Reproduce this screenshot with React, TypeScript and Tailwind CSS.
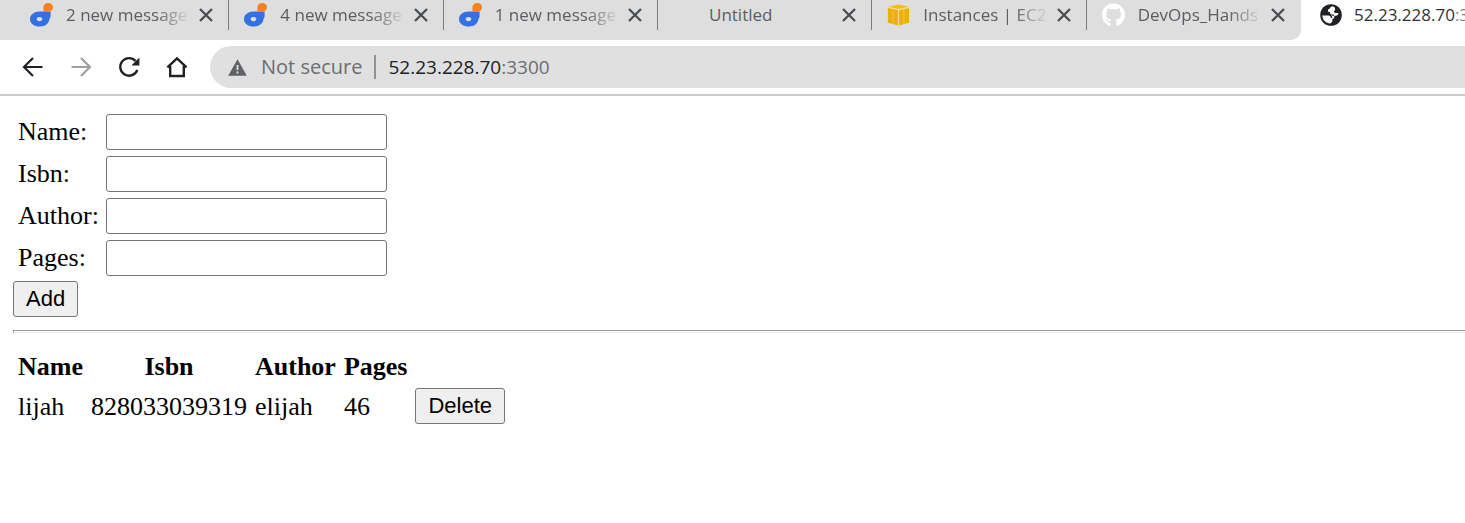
import React from "react";
import { FaGithub } from "react-icons/fa";

function MessengerIcon() {
  return (
    <svg viewBox="0 0 23 24" className="h-6 w-[23px]" aria-hidden="true">
      <path
        fill="#3470e0"
        fillRule="evenodd"
        d="M9.5 8.6H20.6V13C20.6 14.6 19.6 15 19.4 16.6C18.8 20.8 15.2 23.6 9.8 23.6C4.4 23.6 0 20.6 0 16.2C0 11.8 4.2 8.6 9.5 8.6ZM9.5 14C7.8 14 6.7 14.8 6.7 16.1C6.7 17.4 7.8 18.2 9.5 18.2C11.2 18.2 12.3 17.4 12.3 16.1C12.3 14.8 11.2 14 9.5 14Z"
      />
      <path
        fill="#f5821c"
        d="M13.4 8.8V4.6C13.4 1.9 15.4 0.1 18.4 0.1C21.2 0.1 23 1.7 23 4.3C23 7 21 8.8 18 8.8Z"
      />
    </svg>
  );
}

function CubeIcon() {
  return (
    <svg viewBox="0 0 22 22" className="h-[22px] w-[23px]" aria-hidden="true">
      <path fill="#f5bb16" d="M0.6 2.8L11 0.4L21.4 2.8L11 6Z" />
      <path fill="#ebb010" d="M0.4 3.8L10.6 6V21.6L0.4 18.8ZM21.6 3.8L11.4 6V21.6L21.6 18.8Z" />
      <path stroke="#f6dc8c" strokeWidth="1.2" d="M0.6 3.3L11 5.6L21.4 3.3M11 6V21.6" fill="none" />
      <path stroke="#f4c544" d="M5.6 5V20M16.4 5V20" fill="none" />
    </svg>
  );
}

function GlobeIcon() {
  return (
    <svg viewBox="0 0 22 22" className="size-[22px]" aria-hidden="true">
      <circle cx="11" cy="11" r="10.8" fill="#202124" />
      <path
        fill="#fff"
        d="M12.2 2.3C10.8 3 10 3.6 10 4.6C9.2 5 8 5.2 8 6.4C8 7.6 8.6 8 9.8 8C10 9.8 10.8 10.6 12.6 10.6C14 10.6 14.4 11.2 14.4 12.4C14.4 14 13.6 14.6 12.4 14.8V17C12.2 18 11.2 18.6 10.4 19.6C5.6 19.4 2.6 16 2.3 11.6H7.4C9.6 11.6 10.8 12.2 10.8 14H12.2C12.2 12.8 11.6 11.6 10.8 11C12.6 12 16 12.4 17.6 11C19 9.8 18.6 8.8 16.8 9C15 9.2 13.8 8.4 13.8 7.2C15.4 6.6 15.6 4.6 14.4 3Z"
      />
    </svg>
  );
}

function CloseIcon() {
  return (
    <svg viewBox="0 0 22 22" className="size-[22px]" fill="none" stroke="#4a4d51" strokeWidth="2.3" aria-hidden="true">
      <path d="M5 5L17 17M17 5L5 17" />
    </svg>
  );
}

type TabData = { title: string; icon: React.ReactNode };

const tabs: TabData[] = [
  { title: "2 new message", icon: <MessengerIcon /> },
  { title: "4 new message", icon: <MessengerIcon /> },
  { title: "1 new message", icon: <MessengerIcon /> },
  { title: "Untitled", icon: null },
  { title: "Instances | EC2", icon: <CubeIcon /> },
  { title: "DevOps_Hands", icon: <FaGithub className="size-6 text-white" aria-hidden="true" /> },
];

function Tab({ title, icon, last }: TabData & { last: boolean }) {
  return (
    <div
      className={
        last
          ? "flex h-[30px] items-center pr-3 pl-[15px]"
          : "flex h-[30px] items-center border-r border-[#7c7c7c] pr-[11px] pl-[15px]"
      }
    >
      <a href="#" className="flex min-w-0 flex-1 items-center gap-[13px]">
        <span className="flex w-[23px] shrink-0 justify-center">{icon}</span>
        <span
          className={
            title === "Untitled"
              ? "flex-1 whitespace-nowrap text-[17px] leading-6 text-[#5a5d61]"
              : "flex-1 whitespace-nowrap text-[17px] leading-6 text-[#5a5d61] [mask-image:linear-gradient(to_right,#000_72%,transparent)]"
          }
        >
          {title}
        </span>
      </a>
      <button type="button" aria-label={`Close ${title}`} className="ml-1 shrink-0">
        <CloseIcon />
      </button>
    </div>
  );
}

function Toolbar() {
  return (
    <div className="flex items-center border-b-2 border-[#cccccc] bg-white py-1.5">
      <nav className="flex w-[210px] shrink-0 items-center gap-6 pl-[21px] text-[#202124]">
        <button type="button" aria-label="Back">
          <svg viewBox="0 0 24 24" className="size-6" fill="none" stroke="currentColor" strokeWidth="2.2">
            <path d="M21.5 12H3.5M12 3L3 12L12 21" />
          </svg>
        </button>
        <button type="button" aria-label="Forward" className="text-[#a0a0a0]">
          <svg viewBox="0 0 24 24" className="size-6" fill="none" stroke="currentColor" strokeWidth="2.2">
            <path d="M2.5 12H20.5M12 3L21 12L12 21" />
          </svg>
        </button>
        <button type="button" aria-label="Reload">
          <svg viewBox="0 0 24 24" className="size-6">
            <path
              d="M18.6 6A8.8 8.8 0 1 0 20.3 15"
              fill="none"
              stroke="currentColor"
              strokeWidth="2.3"
            />
            <path d="M22.4 2.4V10.4H14.4Z" fill="currentColor" />
          </svg>
        </button>
        <button type="button" aria-label="Home">
          <svg viewBox="0 0 24 24" className="size-6" fill="none" stroke="currentColor" strokeWidth="2.4">
            <path d="M2.4 12.4L12 3.4L21.6 12.4M5.2 11V21H18.8V11" />
          </svg>
        </button>
      </nav>
      <div className="flex h-[42px] flex-1 items-center rounded-l-full bg-[#e0e0e0] pl-[18px] leading-6">
        <svg viewBox="0 0 19 17" className="h-[17px] w-[19px]" aria-hidden="true">
          <path fill="#5f6368" d="M9.5 0.3L18.8 16.7H0.2Z" />
          <path fill="#e0e0e0" d="M8.6 6H10.4V11H8.6ZM8.6 12.6H10.4V14.4H8.6Z" />
        </svg>
        <span className="ml-3.5 text-[20px] text-[#6a6e73]">Not secure</span>
        <span className="mx-3 h-6 w-0.5 bg-[#919191]" />
        <span className="text-[19px] text-[#202124]">
          52.23.228.70<span className="text-[#6a6e73]">:3300</span>
        </span>
      </div>
    </div>
  );
}

const fields = ["Name", "Isbn", "Author", "Pages"];
const books = [{ name: "lijah", isbn: "828033039319", author: "elijah", pages: 46 }];

const cellStyle = "pt-[3px] pr-[3px] pb-px pl-0.5";
const buttonStyle =
  "h-9 rounded-[3px] border border-[#767676] bg-[#efefef] px-3 font-['Liberation_Sans',Arial,sans-serif] text-[22px] leading-[34px]";

export default function App() {
  return (
    <div className="min-h-screen overflow-hidden bg-white">
      <header className="font-['Open_Sans','Noto_Sans',sans-serif]">
        <div className="flex h-10">
          <div className="grid w-[1301px] shrink-0 grid-cols-6 rounded-br-[10px] bg-[#dedede] pl-[15px]">
            {tabs.map((tab, i) => (
              <Tab key={tab.title} {...tab} last={i === tabs.length - 1} />
            ))}
          </div>
          <a href="#" className="flex h-[30px] min-w-0 flex-1 items-center gap-3 overflow-hidden pl-[19px]">
            <span className="shrink-0">
              <GlobeIcon />
            </span>
            <span className="whitespace-nowrap text-[17px] leading-6 text-[#303236]">
              52.23.228.70<span className="text-[#85878a]">:3300</span>
            </span>
          </a>
        </div>
        <Toolbar />
      </header>

      <main className="pt-3.5 pl-[13px] font-['Liberation_Serif','Times_New_Roman',serif] text-[26px] leading-[30px] text-black">
        <form onSubmit={(e) => e.preventDefault()}>
          <table className="border-separate border-spacing-x-[3px] border-spacing-y-[2px]">
            <tbody>
              {fields.map((field) => (
                <tr key={field}>
                  <td className="p-0.5">
                    <label htmlFor={field}>{field}:</label>
                  </td>
                  <td className="p-0.5">
                    <input
                      id={field}
                      type="text"
                      className="block h-9 w-[281px] rounded-[3px] border border-[#767676] bg-white px-1 font-['Liberation_Sans',Arial,sans-serif] text-[22px]"
                    />
                  </td>
                </tr>
              ))}
            </tbody>
          </table>
          <button type="submit" className={`${buttonStyle} mt-px block`}>
            Add
          </button>
        </form>
        <hr className="my-[13px] h-[3px] border border-r-0 border-t-[#9a9a9a] border-b-[#eeeeee] border-l-[#9a9a9a]" />
        <table className="border-separate border-spacing-[3px]">
          <thead>
            <tr>
              {fields.map((field) => (
                <th key={field} className={`${cellStyle} text-center font-bold`}>
                  {field}
                </th>
              ))}
            </tr>
          </thead>
          <tbody>
            {books.map((book) => (
              <tr key={book.isbn}>
                <td className={cellStyle}>{book.name}</td>
                <td className={cellStyle}>{book.isbn}</td>
                <td className={cellStyle}>{book.author}</td>
                <td className={cellStyle}>{book.pages}</td>
                <td className="p-0.5">
                  <button type="button" className={`${buttonStyle} block`}>
                    Delete
                  </button>
                </td>
              </tr>
            ))}
          </tbody>
        </table>
      </main>
    </div>
  );
}
